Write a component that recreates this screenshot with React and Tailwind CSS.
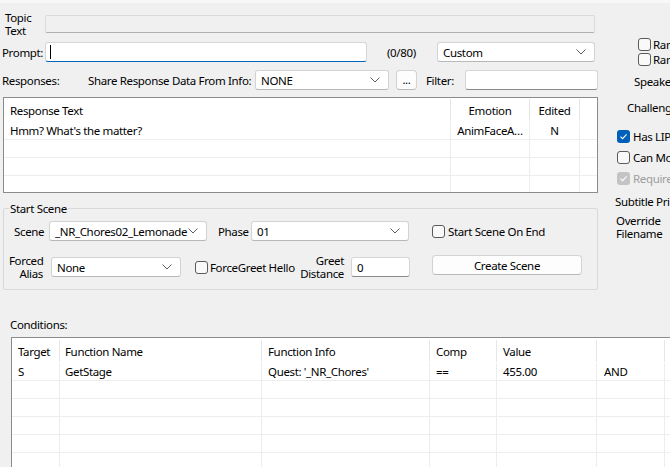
import React from "react";

function Chevron() {
  return (
    <svg width="10" height="6" viewBox="0 0 10 6" className="shrink-0">
      <path d="M0.5 0.5 L5 5 L9.5 0.5" fill="none" stroke="#5f5f5f" strokeWidth="1" />
    </svg>
  );
}

function Dropdown({ w, text }) {
  return (
    <div className={`flex h-[20px] shrink-0 items-center justify-between rounded-[3px] border border-[#d3d3d3] border-b-[#b8b8b8] bg-white pl-[5px] pr-[8px] ${w}`}>
      <span className="whitespace-nowrap">{text}</span>
      <Chevron />
    </div>
  );
}

function Check({ checked, disabled }) {
  if (checked && disabled) {
    return (
      <div className="flex h-[13px] w-[13px] shrink-0 items-center justify-center rounded-[3px] bg-[#c4c4c4]">
        <svg width="9" height="9" viewBox="0 0 9 9">
          <path d="M1.5 4.6 L3.6 6.6 L7.6 2.4" fill="none" stroke="#ffffff" strokeWidth="1.1" />
        </svg>
      </div>
    );
  }
  if (checked) {
    return (
      <div className="flex h-[13px] w-[13px] shrink-0 items-center justify-center rounded-[3px] bg-[#005fb8]">
        <svg width="9" height="9" viewBox="0 0 9 9">
          <path d="M1.5 4.6 L3.6 6.6 L7.6 2.4" fill="none" stroke="#ffffff" strokeWidth="1.1" />
        </svg>
      </div>
    );
  }
  return <div className="h-[13px] w-[13px] shrink-0 rounded-[3px] border border-[#5a5a5a] bg-[#f9f9f9]" />;
}

function HeadCell({ w, children, center, pl }) {
  return (
    <div className={`flex h-[24px] shrink-0 items-center ${w}`}>
      <div className={`flex-1 whitespace-nowrap ${center ? "text-center" : ""} ${pl || ""}`}>{children}</div>
      <div className="h-[22px] w-px bg-[#e6e6e6]" />
    </div>
  );
}

function Cell({ w, children, center, pl }) {
  return (
    <div className={`flex h-[17px] shrink-0 items-center overflow-hidden whitespace-nowrap border-r border-[#ededed] ${w} ${center ? "justify-center" : ""} ${pl || ""}`}>
      {children}
    </div>
  );
}

export default function App() {
  const respRows = [
    ["Hmm? What's the matter?", "AnimFaceA…", "N"],
    ["", "", ""],
    ["", "", ""],
    ["", "", ""],
    ["", "", ""],
  ];
  const condRows = [
    ["S", "GetStage", "Quest: '_NR_Chores'", "==", "455.00", "AND"],
    ["", "", "", "", "", ""],
    ["", "", "", "", "", ""],
    ["", "", "", "", "", ""],
    ["", "", "", "", "", ""],
    ["", "", "", "", "", ""],
    ["", "", "", "", "", ""],
  ];
  return (
    <div className="h-[467px] w-[670px] overflow-hidden bg-[#f0f0f0] font-['Noto_Sans',sans-serif] text-[11.5px] leading-[15px] tracking-[-0.35px] text-black">
      <div className="h-[3px] bg-[#f7f7f7]" />
      <div className="flex">
        {/* Left column */}
        <div className="w-[600px] shrink-0">
          {/* Topic */}
          <div className="mt-[8px] flex h-[26px]">
            <div className="ml-[5px] w-[40px] leading-[13px]">
              Topic
              <br />
              Text
            </div>
            <div className="mt-[4px] h-[18px] w-[550px] rounded-[2px] border border-[#dadada] border-b-[#b0b0b0] bg-[#f0f0f0]" />
          </div>
          {/* Prompt */}
          <div className="mt-[5px] flex h-[20px] items-center">
            <div className="ml-[2px] w-[43px]">Prompt:</div>
            <div className="flex h-[20px] w-[322px] items-center rounded-[3px] border border-[#d6d6d6] border-b-[#0067c0] bg-white pl-[4px]">
              <div className="h-[14px] w-px bg-black" />
            </div>
            <div className="ml-[20px] w-[50px]">(0/80)</div>
            <Dropdown w="w-[158px]" text="Custom" />
          </div>
          {/* Responses */}
          <div className="mt-[8px] flex h-[20px] items-center">
            <div className="ml-[2px] w-[86px] whitespace-nowrap">Responses:</div>
            <div className="w-[167px] whitespace-nowrap">Share Response Data From Info:</div>
            <Dropdown w="w-[134px]" text="NONE" />
            <div className="ml-[7px] flex h-[20px] w-[21px] items-end justify-center rounded-[4px] border border-[#d3d3d3] border-b-[#b8b8b8] bg-[#fdfdfd] pb-[2px]">
              ...
            </div>
            <div className="ml-[9px] w-[39px]">Filter:</div>
            <div className="h-[20px] w-[133px] rounded-[3px] border border-[#d6d6d6] border-b-[#8a8a8a] bg-white" />
          </div>
          {/* Response table */}
          <div className="ml-[3px] mt-[7px] h-[96px] w-[595px] overflow-hidden border border-[#8c8c8c] bg-white">
            <div className="flex">
              <HeadCell w="w-[447px]" pl="pl-[6px]">Response Text</HeadCell>
              <HeadCell w="w-[79px]" center>Emotion</HeadCell>
              <HeadCell w="w-[50px]" center>Edited</HeadCell>
            </div>
            {respRows.map((r, i) => (
              <div key={i} className="flex border-b border-[#ededed]">
                <Cell w="w-[447px]" pl="pl-[6px]">{r[0]}</Cell>
                <Cell w="w-[79px]" center>{r[1]}</Cell>
                <Cell w="w-[50px]" center>{r[2]}</Cell>
                <Cell w="w-[18px]">{""}</Cell>
              </div>
            ))}
          </div>
          {/* Start Scene group */}
          <fieldset className="ml-[3px] mt-[8px] w-[595px] rounded-[2px] border border-[#d9d9d9] pb-[12px] pl-[5px]">
            <legend className="px-[1px]">Start Scene</legend>
            <div className="mt-[5px] flex h-[20px] items-center">
              <div className="ml-[5px] w-[35px]">Scene</div>
              <Dropdown w="w-[158px]" text="_NR_Chores02_Lemonade" />
              <div className="ml-[11px] w-[33px]">Phase</div>
              <Dropdown w="w-[158px]" text="01" />
              <div className="ml-[23px]">
                <Check />
              </div>
              <div className="ml-[3px] whitespace-nowrap">Start Scene On End</div>
            </div>
            <div className="mt-[16px] flex h-[20px] items-center">
              <div className="w-[34px] text-right leading-[13px]">
                Forced
                <br />
                Alias
              </div>
              <div className="ml-[8px]">
                <Dropdown w="w-[130px]" text="None" />
              </div>
              <div className="ml-[14px] flex w-[101px] items-center">
                <Check />
                <div className="ml-[2px] whitespace-nowrap">ForceGreet Hello</div>
              </div>
              <div className="w-[48px] text-right leading-[13px]">
                Greet
                <br />
                Distance
              </div>
              <div className="ml-[7px] flex h-[20px] w-[59px] items-center rounded-[3px] border border-[#d6d6d6] border-b-[#8a8a8a] bg-white pl-[5px]">
                0
              </div>
              <div className="-mt-[4px] ml-[22px] flex h-[20px] w-[150px] items-center justify-center rounded-[4px] border border-[#d3d3d3] border-b-[#b8b8b8] bg-[#fdfdfd]">
                Create Scene
              </div>
            </div>
          </fieldset>
        </div>
        {/* Right panel */}
        <div className="w-[70px] shrink-0 whitespace-nowrap">
          <div className="ml-[38px] mt-[35px] flex h-[13px] items-center">
            <Check />
            <span className="ml-[2px]">Random</span>
          </div>
          <div className="ml-[38px] mt-[2px] flex h-[13px] items-center">
            <Check />
            <span className="ml-[2px]">Random End</span>
          </div>
          <div className="ml-[34px] mt-[8px]">Speaker</div>
          <div className="ml-[27px] mt-[11px]">Challenge</div>
          <div className="ml-[17px] mt-[15px] flex h-[13px] items-center">
            <Check checked />
            <span className="ml-[3px]">Has LIP File</span>
          </div>
          <div className="ml-[17px] mt-[8px] flex h-[13px] items-center">
            <Check />
            <span className="ml-[3px]">Can Move While Talking</span>
          </div>
          <div className="ml-[17px] mt-[8px] flex h-[13px] items-center">
            <Check checked disabled />
            <span className="ml-[3px] text-[#9d9d9d]">Requires Player Activation</span>
          </div>
          <div className="ml-[15px] mt-[9px]">Subtitle Priority</div>
          <div className="ml-[16px] mt-[5px] leading-[13px]">
            Override
            <br />
            Filename
          </div>
        </div>
      </div>
      {/* Conditions */}
      <div className="ml-[10px] mt-[27px]">Conditions:</div>
      <div className="ml-[11px] mt-[5px] w-[720px] border-l border-t border-[#8c8c8c] bg-white">
        <div className="flex pt-[1px]">
          <HeadCell w="w-[48px]" pl="pl-[6px]">Target</HeadCell>
          <HeadCell w="w-[202px]" pl="pl-[5px]">Function Name</HeadCell>
          <HeadCell w="w-[168px]" pl="pl-[6px]">Function Info</HeadCell>
          <HeadCell w="w-[67px]" pl="pl-[6px]">Comp</HeadCell>
          <HeadCell w="w-[100px]" pl="pl-[6px]">Value</HeadCell>
          <HeadCell w="w-[68px]">{""}</HeadCell>
        </div>
        {condRows.map((r, i) => (
          <div key={i} className="flex border-b border-[#ededed]">
            <Cell w="w-[48px]" pl="pl-[6px]">{r[0]}</Cell>
            <Cell w="w-[202px]" pl="pl-[5px]">{r[1]}</Cell>
            <Cell w="w-[168px]" pl="pl-[6px]">{r[2]}</Cell>
            <Cell w="w-[67px]" pl="pl-[6px]">{r[3]}</Cell>
            <Cell w="w-[100px]" pl="pl-[6px]">{r[4]}</Cell>
            <Cell w="w-[68px]" pl="pl-[7px]">{r[5]}</Cell>
            <Cell w="w-[60px]">{""}</Cell>
          </div>
        ))}
      </div>
    </div>
  );
}
